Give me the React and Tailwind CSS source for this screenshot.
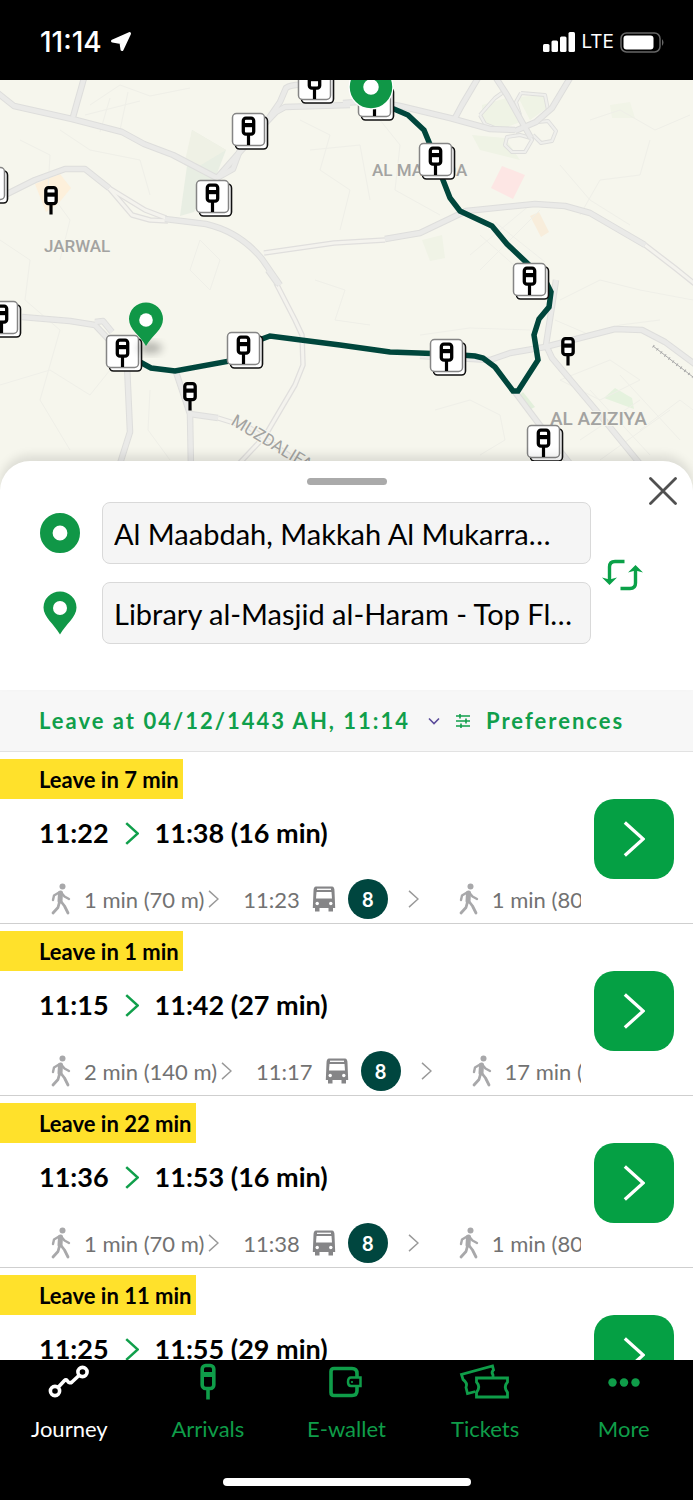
import React from "react";

const roads = [
  "M-5 91 L14 106 L72 119 L122 132 L144 144 L173 155 L217 178",
  "M84 78 L73 117",
  "M-5 200 L35 180 L65 169 L85 169 L109 188",
  "M165 219 L206 224 Q240 232 262 259 L280 285",
  "M217 178 L238 154 L262 128 L280 102 L286 88 Q292 84 305 85",
  "M217 178 L233 169 L240 150 L276 112 L285 107 L350 105",
  "M343 103 L372 101 L400 106 L450 118 L490 129 L515 130",
  "M496 78 L507 95 L522 122 L531 138",
  "M570 78 L552 108 L536 122 L515 131",
  "M478 78 L462 105 L455 118",
  "M385 239 L420 233 L466 211 L535 204 L565 206 L590 213 L645 245",
  "M22 317 L70 321 L95 325 L112 343",
  "M95 322 L103 321 L112 332",
  "M127 365 L130 432 L118 470",
  "M176 372 L190 414 L191 470",
  "M190 414 L218 418",
  "M420 356 L490 360 L510 353 L545 347 L615 329 L642 330 L665 342 L700 368",
  "M556 280 L546 345 L552 358 L600 415 L645 470",
  "M515 392 L545 432 L575 470",
  "M268 270 L278 284",
];

const doubleRoads = [
  "M109 188 L145 210 L166 218",
  "M109 188 L132 215 L150 220 L168 221",
  "M264 253 L334 243 L385 240",
  "M276 283 L295 320 L302 335 L303 365 L295 385 L265 436 L235 468",
  "M645 245 L675 268 L700 288",
  "M218 418 L250 428 L310 470",
];

const minorRoads = [
  "M90 105 L120 85 L150 96 L190 88",
  "M100 132 L110 98 M120 130 L128 92 M85 115 L140 101",
  "M20 140 L50 155 L48 190 L70 220 L60 260",
  "M0 240 L30 260 L25 300 L60 330 L40 400 L70 450",
  "M0 385 L50 370 L90 395 L110 370",
  "M150 390 L148 430 L170 460",
  "M60 130 L90 150 L140 160 L150 195",
  "M300 120 L330 135 L320 170 L350 190 L340 230",
  "M310 150 L360 145 L370 200",
  "M315 280 L345 290 L335 320 L370 325",
  "M200 240 L190 270 L210 290 L220 260 Z",
  "M380 120 L400 145 L395 190 L440 215",
  "M590 120 L620 110 L655 130 L690 115",
  "M580 215 L600 180 L640 175 L650 140",
  "M560 165 L590 200 L630 225",
  "M480 270 L540 210 M470 255 L530 205 M480 235 L525 275 M495 222 L545 262",
  "M560 300 L600 280 L640 290 L693 300",
  "M555 320 L590 335 L620 325 L660 320",
  "M420 335 L470 328 L530 330",
  "M435 410 L470 400 L500 415 L505 440 L480 455",
  "M560 380 L610 360 L640 380 L600 400 Z",
  "M580 440 L640 400 M600 460 L670 410 M620 375 L680 440 M590 390 L650 455",
  "M640 430 L680 400 L693 410",
];

const interchange =
  "M480 115 L495 98 L502 93 M521 93 L545 95 L548 110 L535 122 M480 115 L485 124 L500 130 M521 93 L516 102 L520 115 M531 138 L520 135 L507 137 L505 145 L512 152 L525 152 L532 140 Z M538 122 L548 121 L556 131 L552 141 L541 143 L533 135";

const stops = [
  [298, 67],
  [232, 113],
  [196, 180],
  [-28, 167],
  [358, 84],
  [419, 143],
  [513, 263],
  [-15, 301],
  [106, 335],
  [227, 332],
  [430, 339],
  [527, 425],
];

const looseStops = [
  [51, 186],
  [190, 382],
  [568, 337],
];

const journeys = [
  { leave: "Leave in 7 min", from: "11:22", to: "11:38 (16 min)", walk: "1 min (70 m)", bus: "11:23", last: "1 min (80 m)" },
  { leave: "Leave in 1 min", from: "11:15", to: "11:42 (27 min)", walk: "2 min (140 m)", bus: "11:17", last: "17 min (1.2 km)" },
  { leave: "Leave in 22 min", from: "11:36", to: "11:53 (16 min)", walk: "1 min (70 m)", bus: "11:38", last: "1 min (80 m)" },
  { leave: "Leave in 11 min", from: "11:25", to: "11:55 (29 min)", walk: "1 min (70 m)", bus: "11:27", last: "17 min (1.2 km)" },
];

function StopSign({ x, y }) {
  return (
    <g transform={`translate(${x} ${y})`}>
      <rect x="-5.2" y="1.6" width="10.4" height="16" rx="2.6" fill="#fff" stroke="#000" strokeWidth="3.3" />
      <path d="M-5 8.6H5" stroke="#000" strokeWidth="4.2" />
      <path d="M0 18V28.5" stroke="#000" strokeWidth="3.2" />
    </g>
  );
}

function StopMarker({ x, y }) {
  return (
    <g>
      <rect x={x + 3.5} y={y + 4} width="32" height="32" rx="4" fill="#fff" stroke="#111" strokeWidth="1.6" />
      <rect x={x + 0.5} y={y + 0.5} width="32" height="32" rx="4" fill="#fff" stroke="#858585" strokeWidth="1.5" />
      <StopSign x={x + 16.5} y={y + 3.5} />
    </g>
  );
}

function MapView() {
  return (
    <div className="h-[411px] shrink-0 bg-[#f6f6ed]">
      <svg viewBox="0 80 693 411" preserveAspectRatio="xMidYMid slice" className="block h-full w-full" aria-label="Route map">
        <defs>
          <filter id="soft" x="-50%" y="-50%" width="200%" height="200%">
            <feGaussianBlur stdDeviation="4" />
          </filter>
        </defs>
        <path d="M192 130 L226 150 L216 176 L194 212 L180 216 Z" fill="#e8eee3" />
        <path d="M192 130 L226 150 L196 168 L184 165 Z" fill="#eff1e5" />
        <path d="M35 184 L60 174 L71 188 L58 204 L46 212 Z" fill="#fdf0db" />
        <path d="M502 166 L525 175 L513 199 L491 188 Z" fill="#fde6e4" />
        <path d="M530 216 L539 212 L549 232 L541 237 Z" fill="#f8eddb" />
        <path d="M422 240 L442 235 L445 258 L430 261 Z" fill="#f0f3e6" />
        <path d="M482 105 L510 97 L520 122 L500 130 L482 125 Z M518 97 L545 95 L547 108 L530 120 Z M472 135 L505 138 L520 160 L480 150 Z" fill="#eff3e5" />
        <path d="M615 388 L632 398 L634 409 L604 398 Z" fill="#e5f2de" />
        <path d="M523 392 L535 407 L527 411 L517 397 Z" fill="#e2efdb" />
        <path d="M610 105 L630 102 L635 118 L612 118 Z" fill="#f1f4e7" />

        <g fill="none" stroke="#efefe8" strokeWidth="1">
          {minorRoads.map((d) => (
            <path key={d} d={d} />
          ))}
        </g>
        <g fill="none" strokeLinejoin="round">
          <g stroke="#e0dfdd" strokeWidth="5.5">
            {doubleRoads.map((d) => (
              <path key={d} d={d} />
            ))}
          </g>
          <g stroke="#f4f3ee" strokeWidth="3">
            {doubleRoads.map((d) => (
              <path key={d} d={d} />
            ))}
          </g>
          <path d={interchange} stroke="#dededc" strokeWidth="4" />
          <path d={interchange} stroke="#efefec" strokeWidth="2.2" />
          <g stroke="#dededc" strokeWidth="6.5">
            {roads.map((d) => (
              <path key={d} d={d} />
            ))}
          </g>
          <g stroke="#eaeae8" strokeWidth="4.5">
            {roads.map((d) => (
              <path key={d} d={d} />
            ))}
          </g>
          <path d="M653 346 L693 377" stroke="#aaa" strokeWidth="1" />
          <path d="M653 346 L693 377" stroke="#aaa" strokeWidth="3" strokeDasharray="1 4" />
        </g>

        <g fill="#a3a3a1" fontFamily="Roboto, sans-serif" fontSize="17" fontWeight="500" stroke="#f6f6ed" strokeWidth="2" paintOrder="stroke">
          <text x="44" y="252">JARWAL</text>
          <text x="372" y="176">AL MAABDA</text>
          <text x="550" y="425" fontSize="19">AL AZIZIYA</text>
          <text transform="translate(230 424) rotate(31)" fontWeight="400">MUZDALIFAH</text>
        </g>

        <path
          d="M375 103 L394 109 L408 115 L424 130 L431 147 L443 180 L450 198 L460 211 L492 226 L507 244 L527 263 L545 280 L551 292 L549 307 L539 319 L534 335 L538 360 L518 391 L513 391 L495 367 L483 358 L475 356 L447 354 L390 352 L340 345 L270 336 L262 339 L230 361 L175 371 L151 368 L140 362"
          fill="none"
          stroke="#00463c"
          strokeWidth="5.5"
        />
        {stops.map(([x, y]) => (
          <StopMarker key={`${x}-${y}`} x={x} y={y} />
        ))}
        {looseStops.map(([x, y]) => (
          <StopSign key={`${x}-${y}`} x={x} y={y} />
        ))}
        <circle cx="371" cy="87" r="14.5" fill="none" stroke="#fff" strokeWidth="16" />
        <circle cx="371" cy="87" r="14.5" fill="#fff" stroke="#109747" strokeWidth="13.5" />
        <ellipse cx="150" cy="348" rx="12" ry="5" fill="#000" opacity=".3" filter="url(#soft)" />
        <path d="M146 346 C140 335 129 330 129 319 A17 16.5 0 0 1 163 319 C163 330 152 335 146 346 Z" fill="#109747" />
        <circle cx="146" cy="320" r="6.8" fill="#fff" />
      </svg>
    </div>
  );
}

function StatusBar() {
  return (
    <div className="flex h-20 shrink-0 items-center bg-black pl-10 pr-7 pt-1 font-['Inter',sans-serif] text-white">
      <span className="text-[28px] font-medium">11:14</span>
      <svg viewBox="0 0 22 22" className="ml-2 h-[22px] w-[22px]" fill="#fff" stroke="#fff" strokeWidth="3" strokeLinejoin="round">
        <path d="M19.5 2.5 L12 18.5 L11 11.5 L2.500 10 Z" />
      </svg>
      <svg viewBox="0 0 32 20" className="ml-auto h-5 w-8" fill="#fff">
        <rect x="0" y="12" width="6.5" height="8" rx="1.5" />
        <rect x="8.5" y="8.5" width="6.5" height="11.5" rx="1.5" />
        <rect x="17" y="4.5" width="6.5" height="15.5" rx="1.5" />
        <rect x="25.5" y="0" width="6.5" height="20" rx="1.5" />
      </svg>
      <span className="ml-1.5 text-[19px]">LTE</span>
      <svg viewBox="0 0 45 21" className="ml-1.5 h-[21px] w-[45px]">
        <rect x="1" y="1" width="39" height="19" rx="5.5" fill="none" stroke="#666" strokeWidth="1.5" />
        <rect x="3.5" y="3.5" width="30" height="14" rx="3" fill="#fff" />
        <path d="M42 7 Q45 10.5 42 14 Z" fill="#666" />
      </svg>
    </div>
  );
}

function Chevron({ className, width = 2 }) {
  return (
    <svg viewBox="0 0 12 20" className={className} fill="none" stroke="currentColor" strokeWidth={width}>
      <path d="M1 1 L11 10 L1 19" />
    </svg>
  );
}

function WalkIcon() {
  return (
    <svg viewBox="0 0 20 32" className="h-8 w-5 shrink-0 text-[#a8a8aa]" fill="none" stroke="currentColor" strokeLinecap="round" strokeLinejoin="round">
      <circle cx="11.5" cy="3.5" r="3" fill="currentColor" stroke="none" />
      <path d="M9.5 10 L9 18" strokeWidth="5" />
      <path d="M8 9.5 L3 12.5 L2 17" strokeWidth="2.4" />
      <path d="M11 10.5 L13.5 13.5 L18 16" strokeWidth="2.4" />
      <path d="M10 18.5 L13.5 23 L17 30" strokeWidth="2.8" />
      <path d="M8.5 19 L7 24.5 L2 30" strokeWidth="2.8" />
    </svg>
  );
}

function BusIcon() {
  return (
    <svg viewBox="0 0 24 26" className="ml-3 h-[26px] w-6 shrink-0">
      <path d="M4 0.5 H20 Q22.5 0.5 22.5 5 L23.2 22 H0.8 L1.5 5 Q1.5 0.5 4 0.5 Z M3 21 H7.5 V25.5 H3 Z M16.5 21 H21 V25.5 H16.5 Z" fill="#858587" />
      <path d="M5 3.3 H19" stroke="#fff" strokeWidth="1.3" />
      <path d="M4.5 6 H19.5 L20 12.5 H4 Z" fill="#fff" />
      <circle cx="5.2" cy="17.5" r="1.7" fill="#fff" />
      <circle cx="18.8" cy="17.5" r="1.7" fill="#fff" />
    </svg>
  );
}

function JourneyCard({ item }) {
  return (
    <li className="flex h-[172px] shrink-0 border-b border-[#cfcfcf]">
      <div className="min-w-0 flex-1 overflow-hidden pt-[7px]">
        <div className="flex">
          <span className="flex h-10 items-center bg-[#ffe12b] pl-[39px] pr-1 text-[22px] font-bold">{item.leave}</span>
        </div>
        <div className="flex h-[68px] items-center pl-[39px] text-[27px] font-bold">
          <span>{item.from}</span>
          <Chevron className="mx-4 h-[23px] w-[14px] text-[#109f4b]" width={2.2} />
          <span>{item.to}</span>
        </div>
        <div className="mt-3 flex h-10 items-center whitespace-nowrap pl-[51px] text-[22px] text-[#727272]">
          <WalkIcon />
          <span className="ml-[13px]">{item.walk}</span>
          <Chevron className="ml-1 h-[18px] w-[11px] shrink-0 text-[#999]" width={1.6} />
          <span className="ml-6">{item.bus}</span>
          <BusIcon />
          <span className="ml-3 flex h-10 w-10 shrink-0 items-center justify-center rounded-full bg-[#00463f] text-xl font-bold text-white">
            8
          </span>
          <Chevron className="ml-5 h-[18px] w-[11px] shrink-0 text-[#999]" width={1.6} />
          <span className="ml-10">
            <WalkIcon />
          </span>
          <span className="ml-[13px]">{item.last}</span>
        </div>
      </div>
      <button
        type="button"
        aria-label="Show journey"
        className="ml-[13px] mr-[19px] mt-[47px] flex h-20 w-20 shrink-0 items-center justify-center rounded-[20px] bg-[#05a044] text-white"
      >
        <Chevron className="h-[38px] w-[22px]" width={1.8} />
      </button>
    </li>
  );
}

function Sheet() {
  return (
    <section className="relative -mt-[30px] shrink-0 rounded-t-[30px] bg-white pb-[46px] pt-[17px] shadow-[0_-6px_10px_rgba(0,0,0,0.1)]">
      <div className="mx-auto h-[7px] w-20 rounded-full bg-[#aaa]" />
      <button type="button" aria-label="Close" className="absolute right-4 top-4 h-7 w-7">
        <svg viewBox="0 0 28 28" fill="none" stroke="#505050" strokeWidth="2.8" strokeLinecap="round">
          <path d="M1.5 1.5 L26.5 26.5 M26.5 1.5 L1.5 26.5" />
        </svg>
      </button>
      <div className="mt-[17px] flex items-center pl-10 pr-[49px]">
        <div className="flex min-w-0 flex-1 flex-col gap-[18px]">
          <label className="flex items-center gap-[22px]">
            <svg viewBox="0 0 40 40" className="h-10 w-10 shrink-0" aria-label="From">
              <circle cx="20" cy="20" r="13.7" fill="#fff" stroke="#109747" strokeWidth="12.6" />
            </svg>
            <input
              readOnly
              defaultValue="Al Maabdah, Makkah Al Mukarra…"
              className="h-[62px] min-w-0 flex-1 rounded-lg border border-[#d9d9d9] bg-[#f5f5f5] pl-[11px] text-[29px]"
            />
          </label>
          <label className="flex items-center gap-[22px]">
            <svg viewBox="0 0 40 44" className="h-11 w-10 shrink-0" aria-label="To">
              <path d="M20 43.5 C14 33 3.5 26 3.5 16.5 A16.5 16 0 0 1 36.5 16.5 C36.5 26 26 33 20 43.5 Z" fill="#109747" />
              <circle cx="20" cy="17" r="7" fill="#fff" />
            </svg>
            <input
              readOnly
              defaultValue="Library al-Masjid al-Haram - Top Fl…"
              className="h-[62px] min-w-0 flex-1 rounded-lg border border-[#d9d9d9] bg-[#f5f5f5] pl-[11px] text-[29px]"
            />
          </label>
        </div>
        <button type="button" aria-label="Swap" className="ml-[11px] mt-1">
          <svg viewBox="0 0 42 32" className="h-8 w-[42px]" fill="none" stroke="#0aa148" strokeWidth="3.4">
            <path d="M22.5 2.5 H13 Q7.5 2.5 7.5 8 V21" />
            <path d="M0 18.5 L7.5 26 L15 18.5 L7.5 20.5 Z" fill="#0aa148" stroke="none" />
            <path d="M18.5 29.5 H28 Q33.5 29.5 33.5 24 V11" />
            <path d="M26 13.5 L33.5 6 L41 13.5 L33.500 11.5 Z" fill="#0aa148" stroke="none" />
          </svg>
        </button>
      </div>
    </section>
  );
}

const tabs = [
  {
    label: "Journey",
    active: true,
    icon: (
      <>
        <circle cx="11" cy="29" r="4.6" />
        <circle cx="38.5" cy="10" r="4.6" />
        <path d="M14 25.5 L20.5 18.5 Q22 17 23.5 19 Q25.5 22 28 20 L35.5 13" />
      </>
    ),
  },
  {
    label: "Arrivals",
    icon: (
      <>
        <rect x="19.2" y="3.5" width="11.6" height="23" rx="3.5" />
        <path d="M19 12.5 H31" strokeWidth="5" />
        <path d="M25 26 V37.5" />
      </>
    ),
  },
  {
    label: "E-wallet",
    icon: (
      <>
        <path d="M36 15 V11.5 Q36 6.5 31 6.5 H13 Q10 6.5 10 9.5 V30.5 Q10 33.5 13 33.5 H31 Q36 33.5 36 28.5 V24" />
        <path d="M39.5 15.5 V24 H30 Q27 24 27 20 Q27 15.5 30 15.5 Z" strokeWidth="2.5" />
        <circle cx="31" cy="20" r="1.1" fill="currentColor" stroke="none" />
      </>
    ),
  },
  {
    label: "Tickets",
    icon: (
      <>
        <path d="M16.5 16 H47.5 V20 Q43 25 47.500 30.5 V35 H16.5 V30.5 Q21 25 16.5 20 Z" strokeWidth="2.8" />
        <path d="M33 16 V13 Q31 10 33.500 8 L32.5 4 L1.500 12.5 L3 17.5 Q8 21 6 25.5 L7.500 31.500 L15.5 29.5" strokeWidth="2.8" />
      </>
    ),
  },
  {
    label: "More",
    icon: (
      <g fill="currentColor" stroke="none">
        <circle cx="13.5" cy="20.5" r="4.2" />
        <circle cx="25" cy="20.5" r="4.2" />
        <circle cx="36.5" cy="20.5" r="4.2" />
      </g>
    ),
  },
];

function TabBar() {
  return (
    <nav className="relative h-[140px] shrink-0 bg-black">
      <ul className="grid grid-cols-5">
        {tabs.map((tab) => (
          <li key={tab.label}>
            <a href="#" className={tab.active ? "flex flex-col items-center text-white" : "flex flex-col items-center text-[#0f9d49]"}>
              <svg viewBox="0 0 50 40" className="mt-0.5 h-10 w-[50px] overflow-visible" fill="none" stroke="currentColor" strokeWidth="3.6">
                {tab.icon}
              </svg>
              <span className="mt-3 text-[22px] leading-[30px]">{tab.label}</span>
            </a>
          </li>
        ))}
      </ul>
      <div className="mx-auto mt-[34px] h-2 w-[248px] rounded-full bg-white" />
    </nav>
  );
}

export default function App() {
  return (
    <div className="flex h-screen flex-col overflow-hidden bg-white font-['Lato',sans-serif] text-black">
      <StatusBar />
      <MapView />
      <Sheet />
      <div className="flex h-[62px] shrink-0 items-center border-b border-[#e2e2e2] bg-[#f7f7f7] pl-[39px] text-[22px] font-bold tracking-[2px] text-[#109f4b]">
        <button type="button" className="flex items-center">
          Leave at 04/12/1443 AH, 11:14
          <svg viewBox="0 0 12 8" className="ml-[18px] h-2 w-3" fill="none" stroke="#5b4b9a" strokeWidth="1.6">
            <path d="M1 1.5 L6 6.5 L11 1.5" />
          </svg>
        </button>
        <button type="button" className="ml-4 flex items-center">
          <svg viewBox="0 0 14 14" className="mr-4 h-[14px] w-[14px]" fill="none" stroke="#109f4b" strokeWidth="1.6">
            <path d="M0 2 H14 M0 7 H14 M0 12 H14 M4 0 V4.5 M10 4.5 V9.5 M5 9.5 V14" />
          </svg>
          Preferences
        </button>
      </div>
      <ul className="flex min-h-0 flex-1 flex-col overflow-hidden">
        {journeys.map((item) => (
          <JourneyCard key={item.leave} item={item} />
        ))}
      </ul>
      <TabBar />
    </div>
  );
}
